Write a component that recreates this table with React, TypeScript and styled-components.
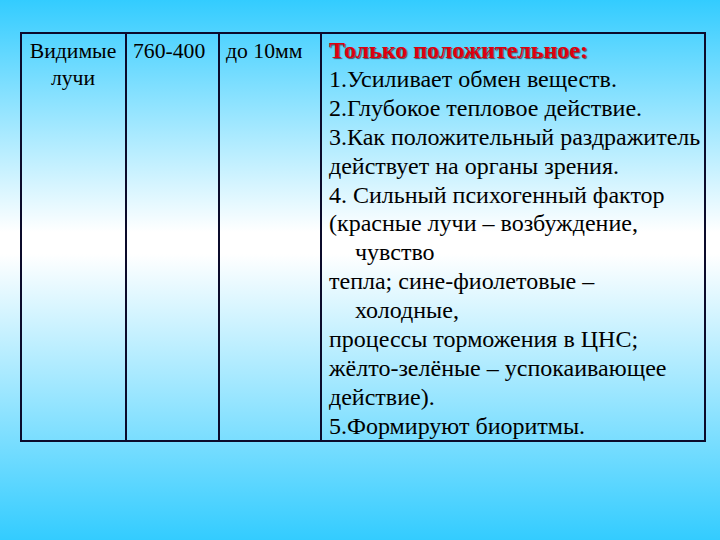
import React from "react";
import styled, { createGlobalStyle } from "styled-components";

const Global = createGlobalStyle`
  html, body { margin: 0; padding: 0; }
  body { font-family: "Liberation Serif", "Times New Roman", serif; }
`;

const Slide = styled.div`
  width: 720px;
  height: 540px;
  box-sizing: border-box;
  padding: 32px 0 0 20px;
  background: linear-gradient(180deg, #33ccff 0%, #ffffff 43%, #ffffff 47%, #33ccff 100%);
  overflow: hidden;
`;

const Table = styled.div`
  display: grid;
  grid-template-columns: 103px 93px 102px 384px;
  width: 686px;
  height: 410px;
  box-sizing: border-box;
  border: 2px solid #0b0b2b;
  color: #000;
  font-family: "Liberation Serif", "Times New Roman", serif;
`;

const Cell = styled.div<{ $center?: boolean; $first?: boolean; $big?: boolean }>`
  border-left: ${(p) => (p.$first ? "none" : "2px solid #0b0b2b")};
  padding-top: ${(p) => (p.$big ? "2px" : "4px")};
  padding-right: 4px;
  padding-left: ${(p) => (p.$center ? "3px" : p.$big ? "7px" : "6px")};
  text-align: ${(p) => (p.$center ? "center" : "left")};
  white-space: nowrap;
  font-size: ${(p) => (p.$big ? "24px" : "21.7px")};
  line-height: ${(p) => (p.$big ? "28.9px" : "27px")};
`;

const Heading = styled.div`
  color: #dd0010;
  font-weight: bold;
  text-shadow: 1px 1px 1px rgba(60, 0, 0, 0.65);
`;

const Line = styled.div<{ $indent?: boolean }>`
  padding-left: ${(p) => (p.$indent ? "26px" : "0")};
`;

const lines: { text: string; indent?: boolean }[] = [
  { text: "1.Усиливает обмен веществ." },
  { text: "2.Глубокое тепловое действие." },
  { text: "3.Как положительный раздражитель" },
  { text: "действует на органы зрения." },
  { text: "4. Сильный психогенный фактор" },
  { text: "(красные лучи – возбуждение," },
  { text: "чувство", indent: true },
  { text: "тепла; сине-фиолетовые –" },
  { text: "холодные,", indent: true },
  { text: "процессы торможения в ЦНС;" },
  { text: "жёлто-зелёные – успокаивающее" },
  { text: "действие)." },
  { text: "5.Формируют биоритмы." },
];

export default function App() {
  return (
    <>
      <Global />
      <Slide>
        <Table>
          <Cell $first $center>
            Видимые
            <br />
            лучи
          </Cell>
          <Cell>760-400</Cell>
          <Cell>до 10мм</Cell>
          <Cell $big>
            <Heading>Только положительное:</Heading>
            {lines.map((l, i) => (
              <Line key={i} $indent={l.indent}>
                {l.text}
              </Line>
            ))}
          </Cell>
        </Table>
      </Slide>
    </>
  );
}
